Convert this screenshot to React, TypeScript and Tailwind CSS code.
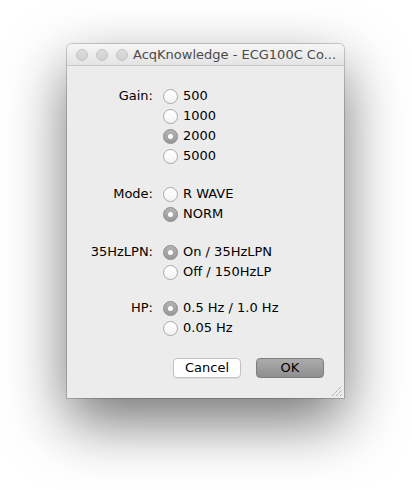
import React from "react";

type Group = { label: string; options: string[]; selected: number };

const groups: Group[] = [
  { label: "Gain:", options: ["500", "1000", "2000", "5000"], selected: 2 },
  { label: "Mode:", options: ["R WAVE", "NORM"], selected: 1 },
  { label: "35HzLPN:", options: ["On / 35HzLPN", "Off / 150HzLP"], selected: 0 },
  { label: "HP:", options: ["0.5 Hz / 1.0 Hz", "0.05 Hz"], selected: 0 },
];

const groupGaps = ["mt-0", "mt-[18px]", "mt-[18px]", "mt-4"];

const Radio = ({ on }: { on: boolean }) =>
  on ? (
    <span className="flex h-[15px] w-[15px] shrink-0 items-center justify-center rounded-full border border-[#8a8a8a] bg-gradient-to-b from-[#b4b4b4] to-[#999999]">
      <span className="h-[5px] w-[5px] rounded-full bg-white" />
    </span>
  ) : (
    <span className="h-[15px] w-[15px] shrink-0 rounded-full border border-[#a9a9a9] bg-gradient-to-b from-white to-[#f4f4f4]" />
  );

const TrafficLight = () => (
  <span className="h-3 w-3 rounded-full border border-[#c3c3c3] bg-gradient-to-b from-[#dcdcdc] to-[#d0d0d0]" />
);

export default function App() {
  return (
    <div
      className="h-[490px] w-[412px] bg-white pl-[67px] pt-[44px]"
      style={{ fontFamily: '"DejaVu Sans", "Liberation Sans", sans-serif' }}
    >
      <div className="flex h-[354px] w-[277px] flex-col overflow-hidden rounded-t-[5px] bg-[#ececec] shadow-[0_0_0_1px_rgba(0,0,0,0.18),0_24px_60px_rgba(0,0,0,0.55)]">
        {/* title bar */}
        <div className="flex h-[22px] shrink-0 items-center border-b border-[#c8c8c8] bg-gradient-to-b from-[#f6f6f6] to-[#e4e4e4] pl-[9px]">
          <div className="flex gap-2">
            <TrafficLight />
            <TrafficLight />
            <TrafficLight />
          </div>
          <span className="ml-[5px] text-[13px] leading-none text-[#4a4a4a]">
            AcqKnowledge - ECG100C Co...
          </span>
        </div>

        {/* body */}
        <div className="relative flex flex-1 flex-col pt-5 text-[13px] text-black">
          {groups.map((g, gi) => (
            <div key={g.label} className={`grid grid-cols-[86px_1fr] gap-x-[10px] ${groupGaps[gi]}`}>
              <div className="flex h-5 items-center justify-end">{g.label}</div>
              <div className="flex flex-col">
                {g.options.map((opt, oi) => (
                  <div key={opt} className="flex h-5 items-center gap-[5px]">
                    <Radio on={oi === g.selected} />
                    <span>{opt}</span>
                  </div>
                ))}
              </div>
            </div>
          ))}

          <div className="mt-5 flex gap-[15px] pl-[106px]">
            <button className="flex h-5 w-[68px] items-center justify-center rounded-[4px] border border-[#c2c2c2] bg-white text-[13px] shadow-[0_1px_0_rgba(0,0,0,0.06)]">
              Cancel
            </button>
            <button className="flex h-5 w-[68px] items-center justify-center rounded-[4px] border border-[#7e7e7e] bg-gradient-to-b from-[#acacac] to-[#8e8e8e] text-[13px]">
              OK
            </button>
          </div>

          {/* resize grip */}
          <svg className="absolute bottom-[2px] right-[2px]" width="11" height="11" viewBox="0 0 11 11">
            <g stroke="#8a8a8a" strokeWidth="1" strokeDasharray="1 1">
              <line x1="1" y1="11" x2="11" y2="1" />
              <line x1="5" y1="11" x2="11" y2="5" />
              <line x1="9" y1="11" x2="11" y2="9" />
            </g>
          </svg>
        </div>
      </div>
    </div>
  );
}
